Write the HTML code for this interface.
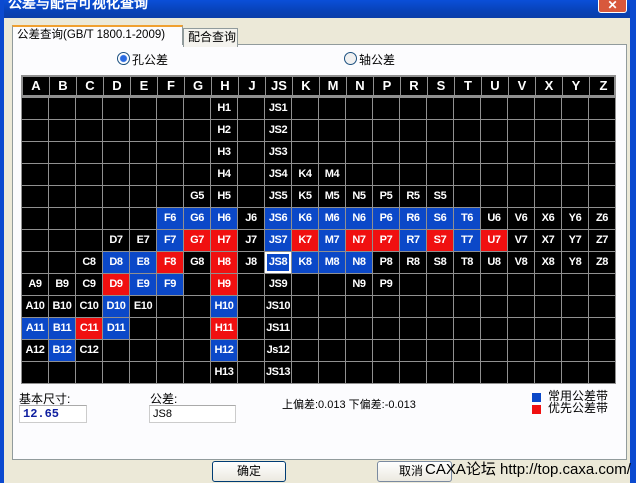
<!DOCTYPE html>
<html><head><meta charset="utf-8"><style>
*{margin:0;padding:0;box-sizing:border-box}
body{width:636px;height:483px;overflow:hidden;background:#ece9d8;position:relative;font-family:"Liberation Sans","Noto Sans CJK SC",sans-serif;font-size:12px;color:#000}
.abs{position:absolute}
#title{left:0;top:0;width:636px;height:18px;background:linear-gradient(#0a4fd8,#0842b8 60%,#0a3ea8);}
#title span{position:absolute;left:8px;top:-7px;color:#fff;font-weight:bold;font-size:14px;font-family:"Liberation Sans","WenQuanYi Zen Hei",sans-serif}
#close{left:598px;top:-4px;width:29px;height:17px;background:#d8583c;border:1px solid #fff;border-radius:3px;color:#fff;font-weight:bold;text-align:center;font-size:12px;line-height:16px}
#lb{left:0;top:0;width:4px;height:483px;background:#0b4ad0}
#rb{left:630px;top:0;width:6px;height:483px;background:#0b4ad0}
#panel{left:12px;top:44px;width:615px;height:416px;background:#fcfcfe;border:1px solid #919b9c}
.tab{height:19px;border:1px solid #919b9c;border-bottom:none;font-size:12px;line-height:17px;padding-left:4px}
#grid{left:21px;top:97px;width:595px;height:287px;background:
 repeating-linear-gradient(90deg,#909090 0 1px,transparent 1px 27px),
 repeating-linear-gradient(180deg,#909090 0 1px,transparent 1px 22px),#000}
#hdr{left:21px;top:75px;width:595px;height:22px;background:#000;border:2px solid #909090}
.h{position:absolute;top:0;width:27px;height:18px;color:#fff;font-weight:bold;font-size:13px;text-align:center;line-height:18px;border-right:1px solid #909090}
.c{position:absolute;width:26px;height:21px;color:#fff;font-weight:bold;font-size:11px;letter-spacing:-0.4px;text-align:center;line-height:21px}
.b{background:#0b48c8}.r{background:#f01010}
.in{background:#fff;border:1px solid #ccc;border-top-color:#aaa;height:18px;font-size:11px;line-height:16px;padding-left:3px}
.btn{height:21px;border:1px solid #003c74;border-radius:3px;background:linear-gradient(#fff,#ece9e0);text-align:center;font-size:12px;line-height:19px}
</style></head><body>
<div id="title" class="abs"><span>公差与配合可视化查询</span></div>
<div id="close" class="abs">✕</div>
<div id="lb" class="abs"></div><div id="rb" class="abs"></div>
<div id="panel" class="abs"></div>
<div class="abs tab" style="left:12px;top:25px;width:171px;height:20px;background:#fcfcfe;border-top:2px solid #f0a030;font-size:11.5px">公差查询(GB/T 1800.1-2009)</div>
<div class="abs tab" style="left:183px;top:28px;width:55px;background:#f4f3ee">配合查询</div>
<div class="abs" style="left:117px;top:52px;width:13px;height:13px;border-radius:50%;border:1px solid #1c5180;background:radial-gradient(circle,#2a6ae0 0 3px,#fff 4px)"></div>
<div class="abs" style="left:132px;top:51px">孔公差</div>
<div class="abs" style="left:344px;top:52px;width:13px;height:13px;border-radius:50%;border:1px solid #1c5180;background:#f0f0f0"></div>
<div class="abs" style="left:359px;top:51px">轴公差</div>
<div id="hdr" class="abs">
<div class="h" style="left:0">A</div><div class="h" style="left:27px">B</div><div class="h" style="left:54px">C</div><div class="h" style="left:81px">D</div><div class="h" style="left:108px">E</div><div class="h" style="left:135px">F</div><div class="h" style="left:162px">G</div><div class="h" style="left:189px">H</div><div class="h" style="left:216px">J</div><div class="h" style="left:243px">JS</div><div class="h" style="left:270px">K</div><div class="h" style="left:297px">M</div><div class="h" style="left:324px">N</div><div class="h" style="left:351px">P</div><div class="h" style="left:378px">R</div><div class="h" style="left:405px">S</div><div class="h" style="left:432px">T</div><div class="h" style="left:459px">U</div><div class="h" style="left:486px">V</div><div class="h" style="left:513px">X</div><div class="h" style="left:540px">Y</div><div class="h" style="left:567px;border:none">Z</div>
</div>
<div id="grid" class="abs">
<div class="c" style="left:190px;top:1px">H1</div><div class="c" style="left:244px;top:1px">JS1</div>
<div class="c" style="left:190px;top:23px">H2</div><div class="c" style="left:244px;top:23px">JS2</div>
<div class="c" style="left:190px;top:45px">H3</div><div class="c" style="left:244px;top:45px">JS3</div>
<div class="c" style="left:190px;top:67px">H4</div><div class="c" style="left:244px;top:67px">JS4</div><div class="c" style="left:271px;top:67px">K4</div><div class="c" style="left:298px;top:67px">M4</div>
<div class="c" style="left:163px;top:89px">G5</div><div class="c" style="left:190px;top:89px">H5</div><div class="c" style="left:244px;top:89px">JS5</div><div class="c" style="left:271px;top:89px">K5</div><div class="c" style="left:298px;top:89px">M5</div><div class="c" style="left:325px;top:89px">N5</div><div class="c" style="left:352px;top:89px">P5</div><div class="c" style="left:379px;top:89px">R5</div><div class="c" style="left:406px;top:89px">S5</div>
<div class="c b" style="left:136px;top:111px">F6</div><div class="c b" style="left:163px;top:111px">G6</div><div class="c b" style="left:190px;top:111px">H6</div><div class="c" style="left:217px;top:111px">J6</div><div class="c b" style="left:244px;top:111px">JS6</div><div class="c b" style="left:271px;top:111px">K6</div><div class="c b" style="left:298px;top:111px">M6</div><div class="c b" style="left:325px;top:111px">N6</div><div class="c b" style="left:352px;top:111px">P6</div><div class="c b" style="left:379px;top:111px">R6</div><div class="c b" style="left:406px;top:111px">S6</div><div class="c b" style="left:433px;top:111px">T6</div><div class="c" style="left:460px;top:111px">U6</div><div class="c" style="left:487px;top:111px">V6</div><div class="c" style="left:514px;top:111px">X6</div><div class="c" style="left:541px;top:111px">Y6</div><div class="c" style="left:568px;top:111px">Z6</div>
<div class="c" style="left:82px;top:133px">D7</div><div class="c" style="left:109px;top:133px">E7</div><div class="c b" style="left:136px;top:133px">F7</div><div class="c r" style="left:163px;top:133px">G7</div><div class="c r" style="left:190px;top:133px">H7</div><div class="c" style="left:217px;top:133px">J7</div><div class="c b" style="left:244px;top:133px">JS7</div><div class="c r" style="left:271px;top:133px">K7</div><div class="c b" style="left:298px;top:133px">M7</div><div class="c r" style="left:325px;top:133px">N7</div><div class="c r" style="left:352px;top:133px">P7</div><div class="c b" style="left:379px;top:133px">R7</div><div class="c r" style="left:406px;top:133px">S7</div><div class="c b" style="left:433px;top:133px">T7</div><div class="c r" style="left:460px;top:133px">U7</div><div class="c" style="left:487px;top:133px">V7</div><div class="c" style="left:514px;top:133px">X7</div><div class="c" style="left:541px;top:133px">Y7</div><div class="c" style="left:568px;top:133px">Z7</div>
<div class="c" style="left:55px;top:155px">C8</div><div class="c b" style="left:82px;top:155px">D8</div><div class="c b" style="left:109px;top:155px">E8</div><div class="c r" style="left:136px;top:155px">F8</div><div class="c" style="left:163px;top:155px">G8</div><div class="c r" style="left:190px;top:155px">H8</div><div class="c" style="left:217px;top:155px">J8</div><div class="c b" style="left:244px;top:155px;border:2px solid #fff;line-height:17px">JS8</div><div class="c b" style="left:271px;top:155px">K8</div><div class="c b" style="left:298px;top:155px">M8</div><div class="c b" style="left:325px;top:155px">N8</div><div class="c" style="left:352px;top:155px">P8</div><div class="c" style="left:379px;top:155px">R8</div><div class="c" style="left:406px;top:155px">S8</div><div class="c" style="left:433px;top:155px">T8</div><div class="c" style="left:460px;top:155px">U8</div><div class="c" style="left:487px;top:155px">V8</div><div class="c" style="left:514px;top:155px">X8</div><div class="c" style="left:541px;top:155px">Y8</div><div class="c" style="left:568px;top:155px">Z8</div>
<div class="c" style="left:1px;top:177px">A9</div><div class="c" style="left:28px;top:177px">B9</div><div class="c" style="left:55px;top:177px">C9</div><div class="c r" style="left:82px;top:177px">D9</div><div class="c b" style="left:109px;top:177px">E9</div><div class="c b" style="left:136px;top:177px">F9</div><div class="c r" style="left:190px;top:177px">H9</div><div class="c" style="left:244px;top:177px">JS9</div><div class="c" style="left:325px;top:177px">N9</div><div class="c" style="left:352px;top:177px">P9</div>
<div class="c" style="left:1px;top:199px">A10</div><div class="c" style="left:28px;top:199px">B10</div><div class="c" style="left:55px;top:199px">C10</div><div class="c b" style="left:82px;top:199px">D10</div><div class="c" style="left:109px;top:199px">E10</div><div class="c b" style="left:190px;top:199px">H10</div><div class="c" style="left:244px;top:199px">JS10</div>
<div class="c b" style="left:1px;top:221px">A11</div><div class="c b" style="left:28px;top:221px">B11</div><div class="c r" style="left:55px;top:221px">C11</div><div class="c b" style="left:82px;top:221px">D11</div><div class="c r" style="left:190px;top:221px">H11</div><div class="c" style="left:244px;top:221px">JS11</div>
<div class="c" style="left:1px;top:243px">A12</div><div class="c b" style="left:28px;top:243px">B12</div><div class="c" style="left:55px;top:243px">C12</div><div class="c b" style="left:190px;top:243px">H12</div><div class="c" style="left:244px;top:243px">Js12</div>
<div class="c" style="left:190px;top:265px">H13</div><div class="c" style="left:244px;top:265px">JS13</div>
</div>
<div class="abs" style="left:19px;top:390px">基本尺寸:</div>
<div class="abs in" style="left:19px;top:405px;width:68px;color:#1020a0;font-weight:bold;font-family:'Liberation Mono',monospace;font-size:12px">12.65</div>
<div class="abs" style="left:150px;top:390px">公差:</div>
<div class="abs in" style="left:149px;top:405px;width:87px">JS8</div>
<div class="abs" style="left:282px;top:396px;font-size:11px">上偏差:0.013 下偏差:-0.013</div>
<div class="abs" style="left:532px;top:393px;width:9px;height:9px;background:#0b48c8"></div>
<div class="abs" style="left:532px;top:405px;width:9px;height:9px;background:#f01010"></div>
<div class="abs" style="left:548px;top:390px;font-size:12px;line-height:12px">常用公差带<br>优先公差带</div>
<div class="abs btn" style="left:212px;top:461px;width:74px">确定</div>
<div class="abs btn" style="left:377px;top:461px;width:75px;border-color:#7a8aa0;text-align:left;padding-left:21px">取消</div>
<div class="abs" style="left:425px;top:458px;font-size:15px;color:#000">CAXA论坛 http://top.caxa.com/</div>
</body></html>
